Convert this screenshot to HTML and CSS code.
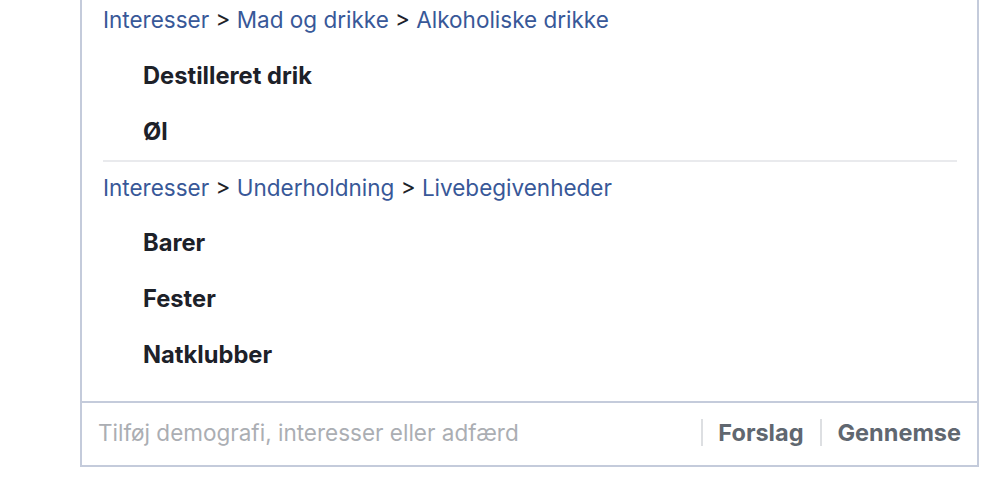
FILE: index.html
```
<!DOCTYPE html>
<html lang="da">
<head>
<meta charset="utf-8">
<link rel="stylesheet" href="styles.css">
</head>
<body>
<div class="box">
  <div class="list">
    <div class="group">
      <div class="crumb"><a class="link">Interesser</a> &gt; <a class="link">Mad og drikke</a> &gt; <a class="link">Alkoholiske drikke</a></div>
      <div class="items">
        <div class="item">Destilleret drik</div>
        <div class="item">Øl</div>
      </div>
    </div>
    <div class="group">
      <div class="crumb"><a class="link">Interesser</a> &gt; <a class="link">Underholdning</a> &gt; <a class="link">Livebegivenheder</a></div>
      <div class="items">
        <div class="item">Barer</div>
        <div class="item">Fester</div>
        <div class="item">Natklubber</div>
      </div>
    </div>
  </div>
  <div class="footer">
    <div class="placeholder">Tilføj demografi, interesser eller adfærd</div>
    <div class="actions">
      <span class="sep"></span>
      <span class="btn">Forslag</span>
      <span class="sep"></span>
      <span class="btn">Gennemse</span>
    </div>
  </div>
</div>
</body>
</html>
```
FILE: styles.css
```
html, body {
  margin: 0;
  padding: 0;
  background: #fff;
}
body {
  font-family: Inter, "Liberation Sans", Arial, sans-serif;
  font-size: 22.5px;
  color: #1d2129;
}
.box {
  margin-left: 80px;
  width: 895px;
  border: 2px solid #c4cbdb;
  border-top: none;
}
.list {
  padding: 0 20px 18px 21px;
}
.group + .group {
  border-top: 2px solid #e9eaed;
  padding-top: 6px;
}
.crumb {
  height: 40px;
  line-height: 40px;
  color: #1d2129;
}
.link {
  color: #385898;
}
.items {
  padding-top: 7px;
}
.group:first-child .items {
  padding-top: 8px;
}
.item {
  font-weight: 700;
  font-size: 23.7px;
  height: 56px;
  line-height: 56px;
  padding-left: 40px;
  color: #1d2129;
}
.footer {
  border-top: 2px solid #c4cbdb;
  height: 64px;
  box-sizing: border-box;
  padding: 0 16px 3px 16px;
  display: flex;
  align-items: center;
  justify-content: space-between;
}
.placeholder {
  color: #abaeb3;
}
.actions {
  display: flex;
  align-items: center;
}
.sep {
  width: 2px;
  height: 27px;
  background: #dddfe2;
  margin-right: 15px;
}
.btn {
  font-weight: 700;
  font-size: 23.5px;
  color: #606770;
}
.btn + .sep {
  margin-left: 17px;
}
```
